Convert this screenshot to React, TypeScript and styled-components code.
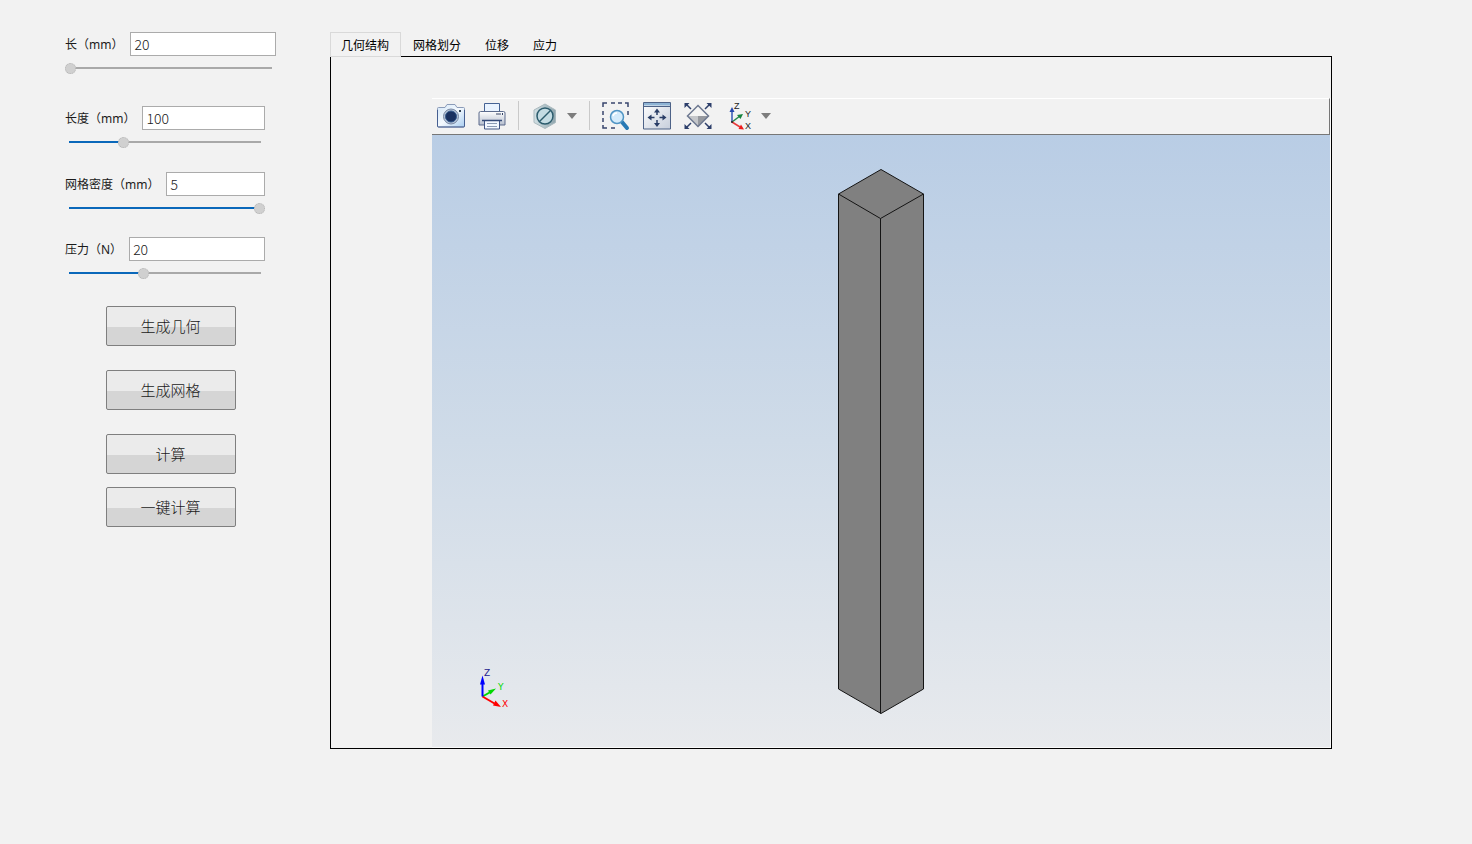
import React, { useState } from "react";
import styled, { createGlobalStyle } from "styled-components";

const GlobalStyle = createGlobalStyle`
  *, *::before, *::after { box-sizing: border-box; }
  body {
    margin: 0;
    background: #f2f2f2;
    color: #1a1a1a;
    font-family: "Noto Sans", "Noto Sans CJK SC", sans-serif;
    font-size: 12px;
  }
  button, input { font: inherit; color: inherit; }
`;

const Page = styled.div`
  display: grid;
  grid-template-columns: 211px minmax(0, 1fr);
  column-gap: 54px;
  min-height: 100vh;
  padding: 32px 140px 95px 65px;
`;

const Sidebar = styled.form`
  display: flex;
  flex-direction: column;
`;

const Field = styled.div<{ $wide?: boolean; $after: number }>`
  width: ${(p) => (p.$wide ? 211 : 200)}px;
  margin-bottom: ${(p) => p.$after}px;
`;

const FieldRow = styled.div`
  display: flex;
  align-items: center;
  gap: 7px;
`;

const FieldLabel = styled.label`
  flex: none;
  height: 24px;
  line-height: 26px;
  white-space: nowrap;
`;

const NumberBox = styled.input`
  flex: 1;
  min-width: 0;
  height: 24px;
  padding: 0 3px;
  border: 1px solid #ababab;
  background: #fff;
  font-family: "Noto Sans CJK SC", sans-serif;
  font-size: 14px;
  font-weight: 300;
  line-height: 22px;
`;

const Slider = styled.input<{ $fill: number }>`
  appearance: none;
  display: block;
  width: 100%;
  height: 24px;
  margin: 0;
  background: linear-gradient(
      to right,
      #0a68ba ${(p) => p.$fill}%,
      #a9a9a9 ${(p) => p.$fill}%
    )
    center / calc(100% - 8px) 2px no-repeat;

  &::-webkit-slider-thumb {
    appearance: none;
    width: 11px;
    height: 11px;
    border: 1px dotted #b4b4b4;
    border-radius: 50%;
    background: #d0d0d0;
  }
`;

const Actions = styled.div`
  display: flex;
  flex-direction: column;
  align-items: center;
  gap: 24px;
`;

const ActionPair = styled.div`
  display: flex;
  flex-direction: column;
  gap: 13px;
`;

const ActionButton = styled.button`
  width: 130px;
  height: 40px;
  padding: 0 0 2px;
  border: 1px solid #7f7f7f;
  border-radius: 2px;
  background: linear-gradient(#ebebeb 52%, #d5d5d5 52%);
  font-family: "Noto Sans CJK SC", sans-serif;
  font-size: 15px;
  font-weight: 300;
`;

const Main = styled.main`
  display: flex;
  flex-direction: column;
  min-width: 0;
`;

const TabList = styled.div`
  display: flex;
  gap: 1px;
  margin-bottom: -1px;
`;

const Tab = styled.button<{ $active: boolean }>`
  position: relative;
  z-index: ${(p) => (p.$active ? 1 : 0)};
  height: 25px;
  padding: 0 11px 0 10px;
  border: 1px solid ${(p) => (p.$active ? "#d9d9d9" : "transparent")};
  background: ${(p) => (p.$active ? "#f2f2f2" : "transparent")};
  color: #000;
  font-family: "Noto Sans CJK SC", sans-serif;
  line-height: 24px;
`;

const TabPanel = styled.section`
  flex: 1;
  display: flex;
  border: 1px solid #000;
  padding: 41px 0 0 101px;
`;

const Viewer = styled.div`
  flex: 1;
  display: flex;
  flex-direction: column;
  min-width: 0;
  border: solid #fafafa;
  border-width: 0 1px 1px 0;
`;

const Toolbar = styled.div`
  display: flex;
  align-items: center;
  gap: 13px;
  height: 37px;
  padding: 0 5px 2px;
  border: solid #777;
  border-width: 1px 1px 1px 0;
  border-top-color: #fff;
`;

const ToolGroup = styled.div`
  display: flex;
  align-items: center;
  gap: 8px;
`;

const ToolButton = styled.button<{ $narrow?: boolean }>`
  display: block;
  flex: none;
  width: ${(p) => (p.$narrow ? 10 : 28)}px;
  height: 28px;
  padding: 0;
  border: 0;
  background: none;

  svg { display: block; overflow: visible; }
`;

const Separator = styled.span`
  width: 1px;
  height: 29px;
  margin: 0 -1px;
  background: #c9c9c9;
`;

const Viewport = styled.div`
  position: relative;
  flex: 1;
  display: flex;
  align-items: center;
  justify-content: center;
  padding-top: 1px;
  background: linear-gradient(#b9cde5, #cfdbe8 50%, #e8eaed);
`;

const Triad = styled.svg`
  position: absolute;
  left: 43px;
  bottom: 32px;
`;

const CameraIcon = () => (
  <svg width="28" height="28" viewBox="0 0 28 28">
    <defs>
      <linearGradient id="cam" x2="1" y2="1">
        <stop stopColor="#d3e6f8" />
        <stop offset=".5" stopColor="#f4f9fe" />
        <stop offset="1" stopColor="#a9cdf0" />
      </linearGradient>
    </defs>
    <path d="M1.500 5.500h6.500l2-3h8l2 3h6.500q1 0 1 1V24q0 1-1 1h-25q-1 0-1-1V6.500q0-1 1-1z" fill="url(#cam)" stroke="#8b9bb8" />
    <path d="M.500 8v16q0 1 1 1h25q1 0 1-1V8" fill="none" stroke="#465f91" />
    <circle cx="14" cy="14.500" r="7.500" fill="#b4c3d8" stroke="#7888a3" />
    <circle cx="14" cy="14.500" r="5.500" fill="#1a3160" stroke="#345a8d" />
    <rect x="22" y="8" width="2" height="2" fill="#345" />
  </svg>
);

const PrinterIcon = () => (
  <svg width="28" height="28" viewBox="0 0 28 28">
    <defs>
      <linearGradient id="prn" x2="0" y2="1">
        <stop stopColor="#fff" />
        <stop offset="1" stopColor="#b4bdcd" />
      </linearGradient>
    </defs>
    <path d="M6.500 10V1.500h15V10" fill="#e9f3ff" stroke="#456294" />
    <path d="M2.500 9.500h23q1.500 0 1.500 1.500v12H1V11q0-1.500 1.500-1.500z" fill="url(#prn)" stroke="#5c6b8c" />
    <path d="M18 12h5M24.500 11v2" stroke="#344365" />
    <path d="M6.500 18.500h15v8.500h-15z" fill="#f3f8ff" stroke="#415684" />
    <path d="M4 18.500h20" stroke="#344b78" strokeWidth="1.500" />
    <path d="M9 21.500h10M9 24.500h10" stroke="#8c9cb5" />
  </svg>
);

const ClipIcon = () => (
  <svg width="28" height="28" viewBox="0 0 28 28">
    <defs>
      <linearGradient id="hex">
        <stop stopColor="#d3e1e5" />
        <stop offset="1" stopColor="#8fa5ad" />
      </linearGradient>
    </defs>
    <path d="M14 2 24.500 8v12.500L14 26.500 3 20.500V8z" fill="url(#hex)" stroke="#aab9be" />
    <circle cx="14" cy="14" r="8" fill="#c4dce3" stroke="#2c5c6d" strokeWidth="1.500" />
    <path d="m8.500 19.500 11-11" stroke="#2c5c6d" strokeWidth="1.500" />
  </svg>
);

const ZoomBoxIcon = () => (
  <svg width="28" height="28" viewBox="0 0 28 28">
    <path
      d="M1 5V1h4M9 1h4M16 1h4M23 1h3v4M1 9v4M1 16v4M1 23v3h4M9 26h4M26 9v4"
      fill="none"
      stroke="#38466e"
      strokeWidth="1.500"
    />
    <path d="m20 20 5 6" stroke="#2879b4" strokeWidth="4" strokeLinecap="round" />
    <circle cx="15" cy="15" r="6.500" fill="#d4ebfb" stroke="#4f94c4" strokeWidth="1.500" />
    <path d="M11 14q1-3 4-3" fill="none" stroke="#fff" strokeWidth="1.500" />
  </svg>
);

const PanIcon = () => (
  <svg width="28" height="28" viewBox="0 0 28 28">
    <defs>
      <linearGradient id="pan" x2="1" y2="1">
        <stop stopColor="#fff" />
        <stop offset="1" stopColor="#c6cedb" />
      </linearGradient>
    </defs>
    <path d="M.500.500h27v26.500H.500z" fill="url(#pan)" stroke="#4d6287" />
    <path d="M1 1h26v2.500H1z" fill="#8eb4d5" />
    <path d="M0 4.500h28" stroke="#4d6287" />
    <path d="M14 9v4M14 18v4M7.500 15.500h4M16.500 15.500h4" stroke="#293d66" strokeWidth="1.500" />
    <path d="m14 6.500 3 4h-6zM14 25l3-4h-6zM4.500 15.500l4-3v6zM23.500 15.500l-4-3v6z" fill="#293d66" />
  </svg>
);

const FitIcon = () => (
  <svg width="28" height="28" viewBox="0 0 28 28">
    <path d="M14 3.500 24.500 14H3.500z" fill="#f4f4f4" />
    <path d="M3.500 14H14v10.500z" fill="#c4c6ca" />
    <path d="M24.500 14H14v10.500z" fill="#96999f" />
    <path d="M14 3.500 24.500 14 14 24.500 3.500 14z" fill="none" stroke="#6d7890" strokeWidth="1.500" />
    <path d="m2 2 5 5M26 2l-5 5M2 26l5-5M26 26l-5-5" stroke="#2d3f6b" strokeWidth="1.500" />
    <path d="M.500 1h5l-5 5zM27.500 1h-5l5 5zM.500 27h5l-5-5zM27.500 27h-5l5-5z" fill="#2d3f6b" />
  </svg>
);

const AxesIcon = () => (
  <svg width="28" height="28" viewBox="0 0 28 28" fontFamily="Liberation Sans, sans-serif" fontSize="9">
    <path d="M7 20V9" stroke="#3556b5" strokeWidth="1.500" />
    <path d="m7 5 2.500 5h-5z" fill="#2648ad" />
    <path d="m7 20 8-6" stroke="#23874b" strokeWidth="1.500" />
    <path d="m18 12-2.500 5-3.500-4z" fill="#16843e" />
    <path d="m7 20 8 5" stroke="#e83a3a" strokeWidth="1.500" />
    <path d="m19 27.500-5.500-.500 2.500-4.500z" fill="#ee1c1c" />
    <circle cx="7" cy="20" r="1" fill="#222" />
    <text x="9" y="7" fill="#222">Z</text>
    <text x="20" y="15" fill="#222">Y</text>
    <text x="20" y="27" fill="#222">X</text>
  </svg>
);

const ArrowIcon = () => (
  <svg width="10" height="28" viewBox="0 0 10 28">
    <path d="M0 11h10l-5 6z" fill="#7d7d7d" />
  </svg>
);

const Prism = () => (
  <svg width="88" height="548" viewBox="0 0 88 548" role="img" aria-label="几何模型">
    <path d="M44 1.500 86.500 26v495L44 545.500 1.500 521V26z" fill="#808080" stroke="#141414" />
    <path d="M1.500 26 43.500 50.500 86.500 26M43.500 50.500v495" fill="none" stroke="#141414" />
  </svg>
);

type FieldSpec = {
  id: string;
  label: string;
  value: number;
  min: number;
  max: number;
  after: number;
  wide?: boolean;
};

const FIELDS: FieldSpec[] = [
  { id: "side", label: "长（mm）", value: 20, min: 20, max: 100, after: 26, wide: true },
  { id: "length", label: "长度（mm）", value: 100, min: 0, max: 360, after: 18 },
  { id: "mesh", label: "网格密度（mm）", value: 5, min: 0, max: 5, after: 17 },
  { id: "force", label: "压力（N）", value: 20, min: 0, max: 52, after: 21 },
];

const TABS = ["几何结构", "网格划分", "位移", "应力"];

function ParameterField({ spec }: { spec: FieldSpec }) {
  const [value, setValue] = useState(String(spec.value));
  const fill = ((Number(value) - spec.min) / (spec.max - spec.min)) * 100;
  return (
    <Field $wide={spec.wide} $after={spec.after}>
      <FieldRow>
        <FieldLabel htmlFor={spec.id}>{spec.label}</FieldLabel>
        <NumberBox id={spec.id} type="text" value={value} onChange={(e) => setValue(e.target.value)} />
      </FieldRow>
      <Slider
        type="range"
        aria-label={spec.label}
        min={spec.min}
        max={spec.max}
        value={Number(value) || spec.min}
        $fill={fill}
        onChange={(e) => setValue(e.target.value)}
      />
    </Field>
  );
}

export default function App() {
  const [tab, setTab] = useState(0);
  return (
    <>
      <GlobalStyle />
      <Page>
        <Sidebar onSubmit={(e) => e.preventDefault()}>
          {FIELDS.map((spec) => (
            <ParameterField key={spec.id} spec={spec} />
          ))}
          <Actions>
            <ActionButton type="button">生成几何</ActionButton>
            <ActionButton type="button">生成网格</ActionButton>
            <ActionPair>
              <ActionButton type="button">计算</ActionButton>
              <ActionButton type="button">一键计算</ActionButton>
            </ActionPair>
          </Actions>
        </Sidebar>
        <Main>
          <TabList role="tablist">
            {TABS.map((name, i) => (
              <Tab key={name} type="button" role="tab" aria-selected={i === tab} $active={i === tab} onClick={() => setTab(i)}>
                {name}
              </Tab>
            ))}
          </TabList>
          <TabPanel role="tabpanel">
            <Viewer>
              <Toolbar role="toolbar">
                <ToolButton type="button" aria-label="截图"><CameraIcon /></ToolButton>
                <ToolButton type="button" aria-label="打印"><PrinterIcon /></ToolButton>
                <Separator />
                <ToolGroup>
                  <ToolButton type="button" aria-label="裁剪"><ClipIcon /></ToolButton>
                  <ToolButton type="button" $narrow aria-label="裁剪选项"><ArrowIcon /></ToolButton>
                </ToolGroup>
                <Separator />
                <ToolButton type="button" aria-label="框选缩放"><ZoomBoxIcon /></ToolButton>
                <ToolButton type="button" aria-label="平移"><PanIcon /></ToolButton>
                <ToolButton type="button" aria-label="适合窗口"><FitIcon /></ToolButton>
                <ToolGroup>
                  <ToolButton type="button" aria-label="视角"><AxesIcon /></ToolButton>
                  <ToolButton type="button" $narrow aria-label="视角选项"><ArrowIcon /></ToolButton>
                </ToolGroup>
              </Toolbar>
              <Viewport>
                <Prism />
                <Triad width="36" height="50" viewBox="0 0 36 50" fontFamily="DejaVu Sans, sans-serif" fontSize="9">
                  <path d="m7.500 31.500 8-4.500" stroke="#00d800" strokeWidth="2" />
                  <path d="m21 23.500-5.500 6-2.500-4z" fill="#00d800" />
                  <path d="m7.500 31.500 12 7" stroke="#f00" strokeWidth="2" />
                  <path d="m26 42-8-1.500 2.500-5z" fill="#f00" />
                  <path d="M7.500 31.500V16" stroke="#00f" strokeWidth="2" />
                  <path d="m7.500 10.500 2.500 9H5z" fill="#00f" />
                  <text x="9" y="11" fill="#22228c">Z</text>
                  <text x="23" y="25" fill="#00d800">Y</text>
                  <text x="27" y="42" fill="#f00">X</text>
                </Triad>
              </Viewport>
            </Viewer>
          </TabPanel>
        </Main>
      </Page>
    </>
  );
}
